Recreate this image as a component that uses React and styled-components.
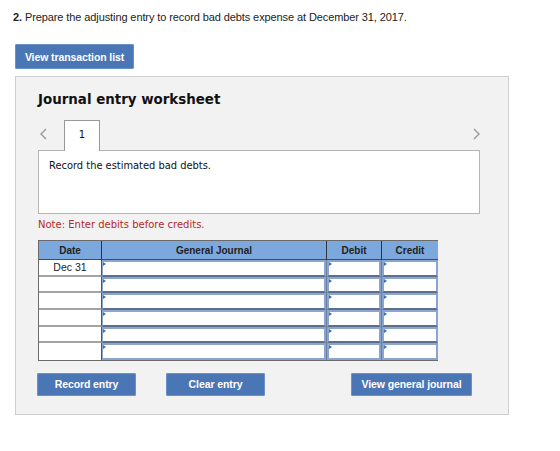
import React from 'react';
import styled, { createGlobalStyle } from 'styled-components';

const GlobalStyle = createGlobalStyle`
  html, body {
    margin: 0;
    padding: 0;
    background: #fff;
  }
`;

const Page = styled.div`
  width: 560px;
  height: 451px;
  padding: 10px 0 0 15px;
  box-sizing: border-box;
  font-family: "Liberation Sans", Arial, sans-serif;
  color: #222;
`;

const Question = styled.p`
  margin: 0 0 0 -2px;
  font-size: 11px;
  line-height: 14px;
  letter-spacing: -0.1px;
  b { font-weight: bold; }
`;

const Button = styled.button`
  display: flex;
  align-items: center;
  justify-content: center;
  height: ${(p) => p.h || 23}px;
  width: ${(p) => p.w}px;
  padding: 0;
  border: none;
  border-radius: 2px;
  background: #4a76b5;
  color: #fff;
  font-family: "Liberation Sans", Arial, sans-serif;
  font-weight: bold;
  font-size: 10.5px;
  letter-spacing: -0.1px;
  box-shadow: 0 0 0 1px #6a92c8 inset;
`;

const TopButton = styled(Button)`
  margin-top: 20px;
`;

const Panel = styled.div`
  margin-top: 7px;
  width: 494px;
  height: 339px;
  box-sizing: border-box;
  background: #f2f2f2;
  border: 1px solid #cfcfcf;
  padding: 15px 28px 0 22px;
`;

const Title = styled.h2`
  margin: 0;
  font-family: "DejaVu Sans", Verdana, sans-serif;
  font-size: 13.4px;
  font-weight: bold;
  color: #111;
  line-height: 16px;
`;

const TabRow = styled.div`
  display: flex;
  align-items: flex-end;
  margin-top: 11px;
  height: 31px;
`;

const Arrow = styled.span`
  width: 26px;
  align-self: center;
  display: flex;
  align-items: center;
  justify-content: ${(p) => (p.right ? 'flex-end' : 'flex-start')};
  padding-left: ${(p) => (p.right ? 0 : 2)}px;
  box-sizing: border-box;
  margin-top: -2px;
`;

const Tab = styled.div`
  width: 36px;
  height: 31px;
  box-sizing: border-box;
  border: 1px solid #999;
  border-bottom: none;
  background: #fff;
  display: flex;
  justify-content: center;
  padding-top: 8px;
  font-family: "DejaVu Sans", Verdana, sans-serif;
  font-size: 10px;
  color: #111;
  position: relative;
  z-index: 1;
  margin-bottom: -1px;
`;

const Spacer = styled.div`
  flex: 1;
`;

const Prompt = styled.div`
  height: 64px;
  box-sizing: border-box;
  border: 1px solid #b5b5b5;
  background: #fff;
  padding: 9px 10px;
  font-family: "DejaVu Sans", Verdana, sans-serif;
  font-size: 9.9px;
  color: #111;
`;

const Note = styled.div`
  margin-top: 5px;
  font-family: "DejaVu Sans", Verdana, sans-serif;
  font-size: 10px;
  color: #b42a2a;
`;

const Table = styled.div`
  margin-top: 10px;
  width: 400px;
  display: grid;
  grid-template-columns: 63px 225px 55px 56px;
  grid-template-rows: 19px repeat(6, 16.67px);
  border: 1px solid #6b6b6b;
  box-sizing: border-box;
  background: #6d7d96;
`;

const Head = styled.div`
  background: #7da8de;
  border-right: ${(p) => (p.last ? 'none' : '1px solid #333')};
  border-bottom: 1px solid #3c4c66;
  display: flex;
  align-items: center;
  justify-content: center;
  font-size: 10px;
  font-weight: bold;
  color: #222;
`;

const DateCell = styled.div`
  background: #fff;
  border-right: 1px solid #555;
  border-bottom: ${(p) => (p.last ? 'none' : '2px solid #a3a3a3')};
  display: flex;
  align-items: center;
  justify-content: center;
  font-size: 10.5px;
  color: #222;
`;

const InputCell = styled.div`
  position: relative;
  background: #fff;
  border: 2px solid #8aa6d0;
  border-left-width: ${(p) => (p.first ? 1 : 2)}px;
  border-bottom-color: ${(p) => (p.last ? '#8aa6d0' : '#5f6f88')};
  margin-right: ${(p) => (p.end ? 0 : 1)}px;
  box-sizing: border-box;

  &::before {
    content: "";
    position: absolute;
    left: 0;
    top: 0;
    border-top: 2px solid transparent;
    border-bottom: 2px solid transparent;
    border-left: 3px solid #3b6fbf;
  }
`;

const Actions = styled.div`
  display: flex;
  margin-top: 12px;
  margin-left: -1px;
`;

const Gap = styled.div`
  width: ${(p) => p.w}px;
`;

const Chevron = ({ dir }) => (
  <svg width="7" height="12" viewBox="0 0 7 12">
    <path
      d={dir === 'left' ? 'M6 1 L1 6 L6 11' : 'M1 1 L6 6 L1 11'}
      fill="none"
      stroke="#999"
      strokeWidth="1.4"
    />
  </svg>
);

const rows = ['Dec 31', '', '', '', '', ''];

const App = () => {
  return (
    <Page>
      <GlobalStyle />
      <Question>
        <b>2.</b> Prepare the adjusting entry to record bad debts expense at December 31, 2017.
      </Question>
      <TopButton w={119} h={25}>View transaction list</TopButton>
      <Panel>
        <Title>Journal entry worksheet</Title>
        <TabRow>
          <Arrow>
            <Chevron dir="left" />
          </Arrow>
          <Tab>1</Tab>
          <Spacer />
          <Arrow right>
            <Chevron dir="right" />
          </Arrow>
        </TabRow>
        <Prompt>Record the estimated bad debts.</Prompt>
        <Note>Note: Enter debits before credits.</Note>
        <Table>
          <Head>Date</Head>
          <Head>General Journal</Head>
          <Head>Debit</Head>
          <Head last>Credit</Head>
          {rows.map((d, i) => {
            const last = i === rows.length - 1;
            return (
              <React.Fragment key={i}>
                <DateCell last={last}>{d}</DateCell>
                <InputCell first last={last} />
                <InputCell last={last} />
                <InputCell last={last} end />
              </React.Fragment>
            );
          })}
        </Table>
        <Actions>
          <Button w={99}>Record entry</Button>
          <Gap w={30} />
          <Button w={99}>Clear entry</Button>
          <Gap w={86} />
          <Button w={121}>View general journal</Button>
        </Actions>
      </Panel>
    </Page>
  );
};

export default App;
